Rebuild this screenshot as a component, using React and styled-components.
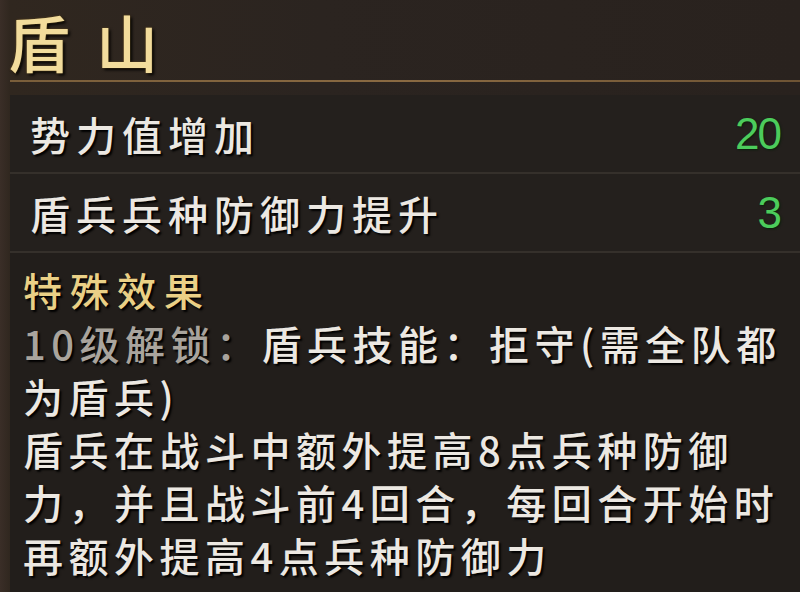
import React from "react";
import styled, { createGlobalStyle } from "styled-components";

const Global = createGlobalStyle`
  html, body { margin: 0; padding: 0; background: #2b2420; }
  #root { width: 800px; height: 592px; }
`;

const Page = styled.div`
  width: 800px;
  height: 592px;
  overflow: hidden;
  background: linear-gradient(90deg, #3a2e27 0px, #30271f 10px, #2b2420 40%, #29221e 100%);
  font-family: "Noto Sans CJK SC", "Noto Sans", sans-serif;
  display: flex;
  flex-direction: column;
`;

const Header = styled.header`
  padding: 4px 0 2px 8px;
`;

const Title = styled.h1`
  display: inline-block;
  margin: 0;
  padding: 0 8px 0 0;
  font-size: 62px;
  font-weight: 500;
  letter-spacing: 26px;
  line-height: 74px;
  white-space: nowrap;
  color: #f2dc9c;
  text-shadow: 0 0 2px #6a5020, 2px 2px 3px #000;
`;

const GoldLine = styled.div`
  height: 2px;
  margin-left: 10px;
  background: linear-gradient(90deg, #7a5e3a, #8a6a42 50%, #6e5434);
`;

const Panel = styled.section`
  margin: 13px 0 0 10px;
  flex: 1;
  background: #221e1b;
  display: flex;
  flex-direction: column;
`;

const StatRow = styled.div`
  height: 77px;
  padding: 0 20px 0 20px;
  display: flex;
  align-items: center;
  justify-content: space-between;
  border-bottom: 2px solid #35302b;
  background: #24201d;
`;

const Label = styled.span`
  font-size: 40px;
  font-weight: 500;
  letter-spacing: 6px;
  color: #ece8e2;
  text-shadow: 2px 2px 2px #000;
`;

const Value = styled.span`
  font-family: "Liberation Sans", Arial, sans-serif;
  font-size: 44px;
  letter-spacing: -2px;
  color: #4ccc5c;
  text-shadow: 1px 1px 2px #0a200c;
`;

const Effects = styled.div`
  padding: 8px 0 0 13px;
`;

const EffectTitle = styled.div`
  font-size: 39px;
  font-weight: 500;
  letter-spacing: 8px;
  line-height: 56px;
  color: #ead086;
  text-shadow: 2px 2px 2px #000;
`;

const Line = styled.div`
  font-size: 40px;
  font-weight: 500;
  letter-spacing: 5.5px;
  line-height: 53px;
  white-space: nowrap;
  color: #ece8e2;
  text-shadow: 2px 2px 2px #000;
`;

const Muted = styled.span`
  color: #a9a49d;
`;

const stats = [
  { label: "势力值增加", value: "20" },
  { label: "盾兵兵种防御力提升", value: "3" },
];

export default function App() {
  return (
    <>
      <Global />
      <Page>
        <Header>
          <Title>盾山</Title>
        </Header>
        <GoldLine />
        <Panel>
          {stats.map((s) => (
            <StatRow key={s.label}>
              <Label>{s.label}</Label>
              <Value>{s.value}</Value>
            </StatRow>
          ))}
          <Effects>
            <EffectTitle>特殊效果</EffectTitle>
            <Line>
              <Muted>10级解锁：</Muted>盾兵技能：拒守(需全队都
            </Line>
            <Line>为盾兵)</Line>
            <Line>盾兵在战斗中额外提高8点兵种防御</Line>
            <Line>力，并且战斗前4回合，每回合开始时</Line>
            <Line>再额外提高4点兵种防御力</Line>
          </Effects>
        </Panel>
      </Page>
    </>
  );
}
